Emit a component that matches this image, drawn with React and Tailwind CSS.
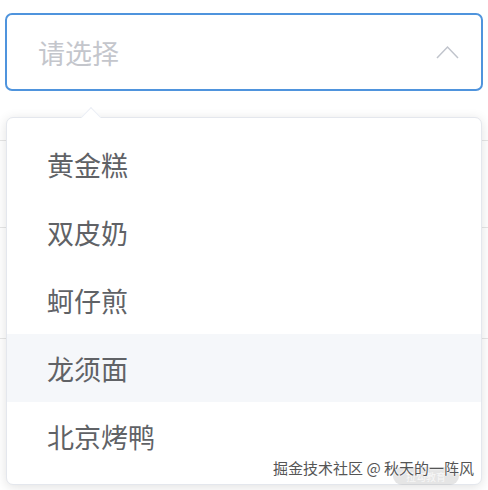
export default function App() {
  const items = ["黄金糕", "双皮奶", "蚵仔煎", "龙须面", "北京烤鸭"];
  const font = { fontFamily: '"Noto Sans CJK SC", "Noto Sans", sans-serif' };
  return (
    <div className="relative w-[488px] h-[490px] bg-white overflow-hidden" style={font}>
      <div className="pt-[13px] px-[5px]">
        <div className="h-[78px] border-2 border-[#4f94dd] rounded-[7px] flex items-center justify-between pl-[31px] pr-[22px]">
          <span className="text-[27px] text-[#c4c6cc] leading-none">请选择</span>
          <svg width="23" height="14" viewBox="0 0 23 14" fill="none">
            <polyline points="1,13 11.5,2 22,13" stroke="#c0c4cc" strokeWidth="1.5" />
          </svg>
        </div>
      </div>
      <div>
        <div className="h-[50px] border-b border-[#e6e6e6]" />
        <div className="h-[87px] border-b border-[#e6e6e6]" />
        <div className="h-[111px] border-b border-[#e6e6e6]" />
      </div>

      <div className="absolute left-[6px] top-[117px] w-[476px] h-[368px] bg-white border border-[#e4e7ed] rounded-[7px] shadow-[0_2px_12px_rgba(0,0,0,0.12)] py-[12px]">
        <div className="absolute left-[77px] top-[-8px] w-[14px] h-[14px] bg-white border-l border-t border-[#ebeef5] rotate-45" />
        <div className="relative flex flex-col">
          {items.map((t, i) => (
            <div
              key={t}
              className={
                "h-[68px] flex items-center pl-[40px] text-[27px] text-[#606266] leading-none " +
                (i === 3 ? "bg-[#f5f7fa]" : "")
              }
            >
              {t}
            </div>
          ))}
        </div>
        <div className="absolute right-[22px] bottom-[-1px] w-[66px] h-[18px] rounded-full bg-[rgba(180,180,180,0.35)] flex items-center justify-center text-[10px] text-white/70">
          拉勾教育
        </div>
        <div className="absolute right-[7px] bottom-[9px] text-[15px] text-[#555] leading-none [text-shadow:0_0_2px_#fff,0_0_2px_#fff]">
          掘金技术社区 @ 秋天的一阵风
        </div>
      </div>
    </div>
  );
}
